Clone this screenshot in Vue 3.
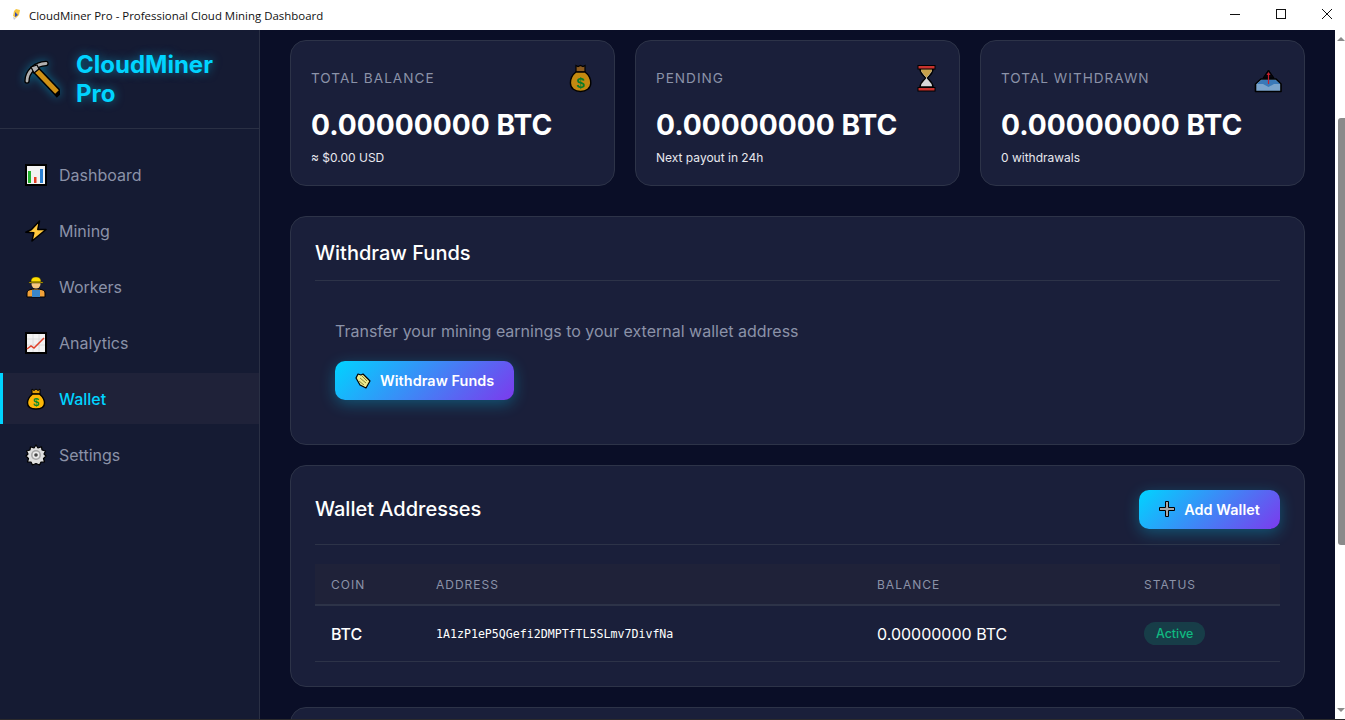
<script setup>
const stats = [
  { label: 'Total Balance', value: '0.00000000 BTC', sub: '≈ $0.00 USD', icon: 'bag' },
  { label: 'Pending', value: '0.00000000 BTC', sub: 'Next payout in 24h', icon: 'hourglass' },
  { label: 'Total Withdrawn', value: '0.00000000 BTC', sub: '0 withdrawals', icon: 'outbox' },
]
const nav = [
  { label: 'Dashboard', icon: 'bars' },
  { label: 'Mining', icon: 'bolt' },
  { label: 'Workers', icon: 'worker' },
  { label: 'Analytics', icon: 'chart' },
  { label: 'Wallet', icon: 'sack', active: true },
  { label: 'Settings', icon: 'gear' },
]
</script>

<template>
  <div class="window">
    <header class="titlebar">
      <svg class="app-icon" viewBox="0 0 16 16" width="16" height="16">
        <path d="M8 2 L12 3 L11 8 L8 11 L5 9 L6 4 Z" fill="#f4c542" />
        <path d="M7 5 L10 8 L7 10 Z" fill="#3a4fb0" />
        <path d="M5 10 L8 11 L6 13 Z" fill="#c9c9d6" />
      </svg>
      <span class="app-title">CloudMiner Pro - Professional Cloud Mining Dashboard</span>
      <div class="win-controls">
        <svg class="win-btn" viewBox="0 0 46 30"><path d="M18 14.5 H28" stroke="#111" fill="none" /></svg>
        <svg class="win-btn" viewBox="0 0 46 30"><rect x="18.5" y="9.5" width="9" height="9" stroke="#111" fill="none" /></svg>
        <svg class="win-btn" viewBox="0 0 46 30"><path d="M18 9 L28 19 M28 9 L18 19" stroke="#111" fill="none" /></svg>
      </div>
    </header>

    <div class="body">
      <aside class="sidebar">
        <div class="brand">
          <svg class="pick" viewBox="0 0 36 38" width="36" height="38">
            <path d="M11 9 L33 32" stroke="#000" stroke-width="8" stroke-linecap="square" fill="none" />
            <path d="M11 9 L33 32" stroke="#cf9115" stroke-width="5" fill="none" />
            <path d="M3 21 C3 12 11 4 22 3.5" stroke="#000" stroke-width="5.4" stroke-linecap="round" fill="none" />
            <path d="M3 21 C3 12 11 4 22 3.5" stroke="#b0b0b0" stroke-width="2.8" stroke-linecap="round" fill="none" />
            <path d="M7 7 L13 5 L15 9 L10 13 Z" fill="#b4b4b4" stroke="#000" stroke-width="1.2" />
          </svg>
          <div class="brand-name">CloudMiner Pro</div>
        </div>
        <nav class="nav">
          <a v-for="item in nav" :key="item.label" class="nav-item" :class="{ active: item.active }">
            <svg class="nav-icon" viewBox="0 0 22 22" width="22" height="22">
              <template v-if="item.icon === 'bars'">
                <rect x="1" y="1" width="20" height="20" fill="#f2f2f2" stroke="#000" stroke-width="2" />
                <rect x="3" y="7" width="3" height="12" fill="#22b02e" />
                <rect x="9" y="13" width="2.5" height="6" fill="#e53d24" />
                <rect x="15" y="5" width="3" height="14" fill="#2a7fd0" />
              </template>
              <template v-else-if="item.icon === 'bolt'">
                <path d="M14.5 1 L6.5 9.5 L0.8 12.2 L8.8 12.8 L7 21 L21 9.5 L12.8 9.5 Z" fill="#ffc83d" stroke="#000" stroke-width="1.5" stroke-linejoin="round" />
              </template>
              <template v-else-if="item.icon === 'worker'">
                <path d="M2 21 V17 C2 14 6 13 11 13 C16 13 20 14 20 17 V21 Z" fill="#f2a23a" stroke="#000" stroke-width="1" />
                <rect x="7" y="14" width="8" height="7" fill="#3a86c8" />
                <circle cx="11" cy="8" r="4.5" fill="#f7c77e" />
                <path d="M4 6 H18 V7 H4 Z M6 6 C6 2 8 1 11 1 C14 1 16 2 16 6 Z" fill="#ffdf00" stroke="#3a3000" stroke-width=".5" />
              </template>
              <template v-else-if="item.icon === 'chart'">
                <rect x="1" y="1" width="20" height="20" fill="#f2f2f2" stroke="#000" stroke-width="2" />
                <path d="M2 7 H20 M2 13 H20 M8 2 V20 M14 2 V20" stroke="#d8d8d8" stroke-width=".8" />
                <path d="M2 17 L6 14 L9 16 L19 6" stroke="#e0432b" stroke-width="1.5" fill="none" />
              </template>
              <template v-else-if="item.icon === 'sack'">
                <path d="M7 1 L9 2.5 L11 1 L13 2.5 L15 1 V6 H7 Z" fill="#e3a008" stroke="#000" stroke-width="1" />
                <path d="M7.5 6 H14.5 C18 9 19.5 12 19.5 15 C19.5 19 16 21 11 21 C6 21 2.5 19 2.5 15 C2.5 12 4 9 7.5 6 Z" fill="#fdb707" stroke="#000" stroke-width="1.4" />
                <text x="11" y="18" text-anchor="middle" class="dollar">$</text>
              </template>
              <template v-else>
                <path d="M11 1 L13 4 L16.5 2.8 L17 6 L20.5 7 L19 10 L21 12 L18.5 14.5 L19.5 18 L16 18 L14.5 21 L11 19.5 L7.5 21 L6 18 L2.5 18 L3.5 14.5 L1 12 L3 10 L1.5 7 L5 6 L5.5 2.8 L9 4 Z" fill="#dedede" stroke="#000" stroke-width="1.2" stroke-linejoin="round" />
                <circle cx="11" cy="11" r="5" fill="#a6a6a6" />
                <circle cx="11" cy="11" r="3.4" fill="#ececec" />
                <circle cx="11" cy="11" r="1.8" fill="#444" />
              </template>
            </svg>
            <span>{{ item.label }}</span>
          </a>
        </nav>
      </aside>

      <main class="main">
        <section class="stats">
          <article v-for="s in stats" :key="s.label" class="stat">
            <div class="stat-head">
              <span class="stat-label">{{ s.label }}</span>
              <svg class="stat-icon" viewBox="0 0 28 28" width="28" height="28">
                <template v-if="s.icon === 'bag'">
                  <path d="M12 1.5 L14 2.5 L16.5 1.5 L19 2.5 L21 1.5 V8 H12 Z" fill="#8a5a20" stroke="#000" stroke-width="1.2" />
                  <path d="M12 8 H21 C25 11 26.8 15 26.8 19 C26.8 24.5 22 27.5 16.5 27.5 C11 27.5 6.4 24.5 6.4 19 C6.4 15 8 11 12 8 Z" fill="#c48a10" stroke="#000" stroke-width="1.4" />
                  <text x="16.5" y="23.5" text-anchor="middle" class="dollar-lg">$</text>
                </template>
                <template v-else-if="s.icon === 'hourglass'">
                  <path d="M11 5 H24 C24 10 19.5 12 18.5 14 C19.5 16 24 18 24 23 H11 C11 18 15.5 16 16.5 14 C15.5 12 11 10 11 5 Z" fill="#d8d8d8" stroke="#000" stroke-width="1.4" />
                  <path d="M12 5 H23 C23 9 18.5 11 17.5 14 C16.5 11 12 9 12 5 Z" fill="#c6a04b" />
                  <rect x="9" y="1.5" width="17" height="3.5" fill="#c8332e" stroke="#000" stroke-width="1" />
                  <rect x="9" y="23.5" width="17" height="3.5" fill="#c8332e" stroke="#000" stroke-width="1" />
                </template>
                <template v-else>
                  <path d="M14.5 6 L20 14 L9 14 Z" fill="#05060f" stroke="#000" stroke-width="1" />
                  <path d="M7 15 H22 L27 20 V27.5 H1.5 V20 Z" fill="#7ba4cc" stroke="#000" stroke-width="1.6" stroke-linejoin="round" />
                  <path d="M3 20 H9 L14.5 23 L20 20 H26 L21.5 16 H7.5 Z" fill="#3a79b8" />
                  <path d="M14.5 9 V20" stroke="#c8202c" stroke-width="1.2" />
                  <path d="M12.5 11 L14.5 8 L16.5 11 Z" fill="#c8202c" />
                </template>
              </svg>
            </div>
            <div class="stat-value">{{ s.value }}</div>
            <div class="stat-sub">{{ s.sub }}</div>
          </article>
        </section>

        <section class="panel">
          <div class="panel-head"><h2>Withdraw Funds</h2></div>
          <div class="withdraw">
            <p>Transfer your mining earnings to your external wallet address</p>
            <button class="btn" type="button">
              <svg viewBox="0 0 16 16" width="16" height="16">
                <path d="M3 1 L6 2 L8 1 L15 8 L11 15 L5 12 L1 5 Z" fill="#efe98c" stroke="#000" stroke-width="1.2" stroke-linejoin="round" />
                <path d="M5 5 L11 10 M7 3 L12 8 M4 8 L9 12" stroke="#8a8a3a" stroke-width="1" />
              </svg>
              <span>Withdraw Funds</span>
            </button>
          </div>
        </section>

        <section class="panel">
          <div class="panel-head spaced">
            <h2>Wallet Addresses</h2>
            <button class="btn" type="button">
              <svg viewBox="0 0 16 16" width="16" height="16">
                <path d="M6.5 .5 h3 v6 h6 v3 h-6 v6 h-3 v-6 h-6 v-3 h6 Z" fill="#a8a8a8" stroke="#000" stroke-width="1" />
              </svg>
              <span>Add Wallet</span>
            </button>
          </div>
          <div class="table">
            <div class="row head">
              <span>Coin</span><span>Address</span><span>Balance</span><span>Status</span>
            </div>
            <div class="row data">
              <span class="coin">BTC</span>
              <code>1A1zP1eP5QGefi2DMPTfTL5SLmv7DivfNa</code>
              <span class="balance">0.00000000 BTC</span>
              <span><em class="badge">Active</em></span>
            </div>
          </div>
        </section>

        <section class="panel next"></section>
      </main>

      <div class="scrollbar">
        <i class="arrow up"></i>
        <i class="thumb"></i>
        <i class="arrow down"></i>
      </div>
    </div>
    <div class="strip"></div>
  </div>
</template>

<style>
html, body { margin: 0; background: #0a0e27; }
</style>

<style scoped>
.window {
  width: 1345px; height: 720px; display: flex; flex-direction: column; overflow: hidden;
  font-family: Inter, "Liberation Sans", sans-serif; color: #fff;
}
.titlebar {
  height: 30px; flex: none; background: #fff; display: flex; align-items: center; color: #111;
  padding-left: 8px;
}
.app-icon { flex: none; }
.app-title { margin-left: 5px; font: 11.45px "Open Sans", sans-serif; }
.win-controls { margin-left: auto; display: flex; margin-right: -5px; }
.win-btn { width: 46px; height: 30px; display: block; }
.body { flex: 1; min-height: 0; display: flex; background: #0a0e27; }
.strip { height: 1px; flex: none; background: #2b2a2c; }

.sidebar { width: 260px; flex: none; box-sizing: border-box; background: #151b33; border-right: 1px solid #2a3044; }
.brand { height: 99px; box-sizing: border-box; border-bottom: 1px solid #2a3044; display: flex; align-items: center; padding-left: 24px; gap: 16px; }
.pick { flex: none; filter: drop-shadow(0 0 5px rgba(0, 212, 255, .45)); }
.brand-name { width: 150px; font-size: 24px; line-height: 29px; font-weight: 700; color: #00d4ff; text-shadow: 0 0 10px rgba(0, 212, 255, .5); }
.nav { padding-top: 20px; display: flex; flex-direction: column; gap: 5px; }
.nav-item { height: 51px; box-sizing: border-box; display: flex; align-items: center; gap: 12px; padding-left: 25px; font-size: 16px; color: #8b92a8; border-left: 3px solid transparent; }
.nav-item .nav-icon { margin-left: -3px; flex: none; }
.nav-item.active { background: #1f2239; border-left-color: #00d4ff; color: #00d4ff; font-weight: 500; }
.dollar { font: 700 11px "Liberation Sans", sans-serif; fill: #0a8a2e; }
.dollar-lg { font: 700 15px "Liberation Sans", sans-serif; fill: #0a7a2a; }

.main { flex: 1; min-width: 0; overflow: hidden; padding: 10px 30px 0; box-sizing: border-box; display: flex; flex-direction: column; gap: 20px; }
.stats { display: grid; grid-template-columns: repeat(3, 325px); gap: 20px; margin-bottom: 10px; flex: none; }
.stat { height: 146px; box-sizing: border-box; background: #1a1f3a; border: 1px solid #2d3348; border-radius: 16px; padding: 24px 20px 0; }
.stat-head { display: flex; justify-content: space-between; align-items: center; height: 26px; }
.stat-label { font-size: 13.6px; letter-spacing: 1px; text-transform: uppercase; color: #8b92a8; margin-top: 0; line-height: 24px; }
.stat-icon { flex: none; margin-right: 2px; overflow: visible; }
.stat-value { font-size: 28.2px; line-height: 35px; font-weight: 700; margin-top: 17px; }
.stat-sub { font-size: 12px; line-height: 16px; margin-top: 7px; color: #e8e8ee; }

.panel { flex: none; box-sizing: border-box; background: #1a1f3a; border: 1px solid #2d3348; border-radius: 16px; padding: 0 24px; }
.panel-head { height: 64px; box-sizing: border-box; padding-top: 8px; border-bottom: 1px solid #2d3348; display: flex; align-items: center; }
.panel-head h2 { margin: 0; font-size: 20px; font-weight: 500; }
.panel-head.spaced { height: 79px; justify-content: space-between; }
.withdraw { padding: 40px 20px 44px; }
.withdraw p { margin: 0 0 20px; font-size: 16px; line-height: 20px; color: #8b92a8; }
.btn { height: 39px; border: 0; border-radius: 10px; padding: 0 20px; display: inline-flex; align-items: center; gap: 9px; color: #fff; font: 600 14.4px Inter, sans-serif; letter-spacing: .07px; background: linear-gradient(135deg, #00d4ff, #7c3aed); box-shadow: 0 4px 15px rgba(0, 212, 255, .3); }
.btn svg { flex: none; }

.table { padding: 19px 0 24px; }
.row { display: grid; grid-template-columns: 105px 441px 267px 152px; align-items: center; }
.row > * { padding-left: 16px; }
.row.head { height: 42px; background: #1f2239; border-bottom: 2px solid #2d3348; box-sizing: border-box; font-size: 12px; letter-spacing: 1px; text-transform: uppercase; color: #8b92a8; }
.row.data { height: 56px; box-sizing: border-box; border-bottom: 1px solid #2d3348; font-size: 16px; }
.coin { font-weight: 500; }
code { font: 11.6px "DejaVu Sans Mono", monospace; }
.badge { display: inline-block; height: 23px; line-height: 23px; padding: 0 12px; border-radius: 12px; background: rgba(16, 185, 129, .2); color: #10b981; font-style: normal; font-size: 12.4px; font-weight: 500; }
.next { height: 60px; }

.scrollbar { width: 10px; flex: none; background: #fff; display: flex; flex-direction: column; align-items: flex-end; }
.thumb { width: 7px; height: 427px; border-radius: 3px 0 0 3px; background: #8a8a8a; margin-top: 77px; margin-bottom: auto; }
.arrow { width: 0; height: 0; border-left: 4px solid transparent; border-right: 4px solid transparent; }
.arrow.up { border-bottom: 4px solid #8a8a8a; margin-top: 7px; }
.arrow.down { border-top: 4px solid #8a8a8a; margin-bottom: 7px; }
</style>
